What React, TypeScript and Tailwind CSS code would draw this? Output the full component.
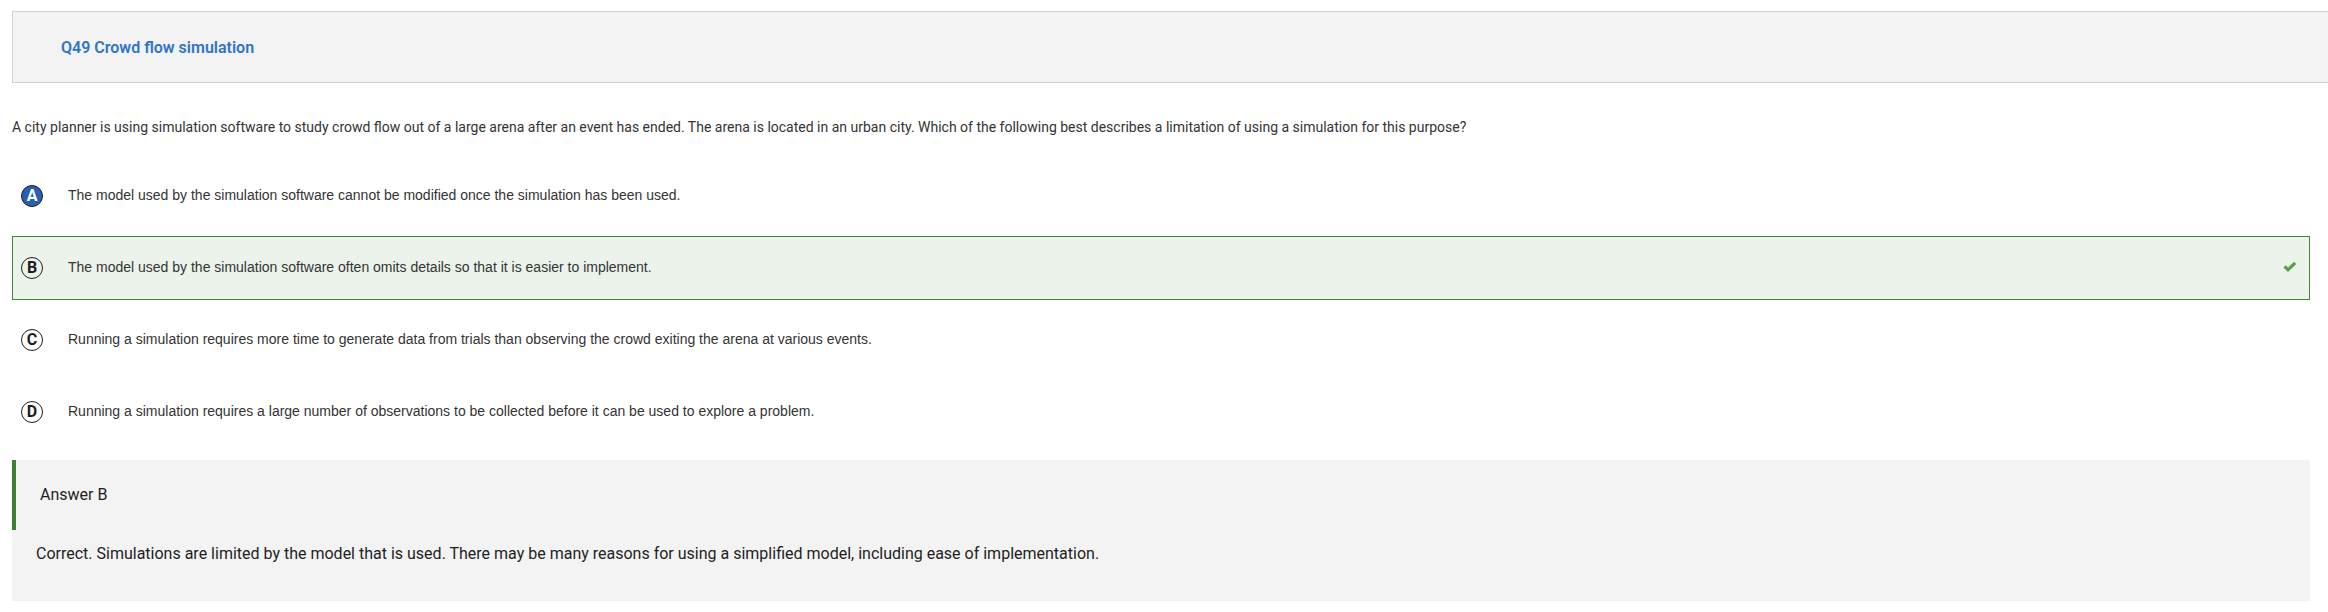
import { useState } from "react";

type Option = { id: string; text: string; correct?: boolean };

const options: Option[] = [
  { id: "A", text: "The model used by the simulation software cannot be modified once the simulation has been used." },
  { id: "B", text: "The model used by the simulation software often omits details so that it is easier to implement.", correct: true },
  { id: "C", text: "Running a simulation requires more time to generate data from trials than observing the crowd exiting the arena at various events." },
  { id: "D", text: "Running a simulation requires a large number of observations to be collected before it can be used to explore a problem." },
];

function CheckMark() {
  return (
    <svg className="h-3 w-3.5 shrink-0" viewBox="0 0 14 12" fill="none" aria-hidden="true">
      <path d="M1.6 5.4 5 8.8 12.2 1.8" stroke="#58a046" strokeWidth="3.2" />
    </svg>
  );
}

function OptionRow({ option, checked, onSelect }: { option: Option; checked: boolean; onSelect: () => void }) {
  return (
    <label
      className={`relative flex min-h-16 cursor-pointer items-center border pl-2 pr-3 ${
        option.correct ? "border-[#46843c] bg-[#ebf3eb]" : "border-transparent"
      }`}
    >
      <input type="radio" name="answer" value={option.id} checked={checked} onChange={onSelect} className="sr-only" />
      <span
        className={`flex size-[22px] shrink-0 items-center justify-center rounded-full border border-[#1e1e1e] font-['Roboto',sans-serif] text-base font-bold leading-5 ${
          checked ? "bg-[#2760b4] text-white" : "text-[#1e1e1e]"
        }`}
      >
        {option.id}
      </span>
      <span className="ml-[25px] flex grow items-center justify-between pb-0.5 text-sm leading-5 text-[#333333]">
        {option.text}
        {option.correct && <CheckMark />}
      </span>
    </label>
  );
}

export default function App() {
  const [selected, setSelected] = useState("A");

  return (
    <main className="bg-white pb-[11px] pl-3 pt-[11px] font-['Roboto','Liberation_Sans',sans-serif]">
      <header className="flex min-h-[72px] items-center border border-r-0 border-[#d0d2d3] bg-[#f3f3f3] px-12 pt-0.5">
        <h1 className="text-base font-semibold leading-6 text-[#3075c5]">Q49 Crowd flow simulation</h1>
      </header>

      <div className="pr-[18px]">
        <p className="mt-8 text-sm leading-6 text-[#333333]">
          A city planner is using simulation software to study crowd flow out of a large arena after an event has ended. The arena is located in an urban city. Which of the following best describes a limitation of using a simulation for this purpose?
        </p>

        <fieldset className="mt-[25px] flex flex-col gap-2 font-['Liberation_Sans',sans-serif]">
          {options.map((option) => (
            <OptionRow key={option.id} option={option} checked={selected === option.id} onSelect={() => setSelected(option.id)} />
          ))}
        </fieldset>

        <section className="mt-4 bg-[#f3f3f3] pb-[35px] text-base leading-6 text-[#1e1e1e]">
          <h2 className="flex min-h-[70px] items-center border-l-4 border-[#3f8036] pl-6">Answer B</h2>
          <p className="mt-3 px-6">
            Correct. Simulations are limited by the model that is used. There may be many reasons for using a simplified model, including ease of implementation.
          </p>
        </section>
      </div>
    </main>
  );
}
